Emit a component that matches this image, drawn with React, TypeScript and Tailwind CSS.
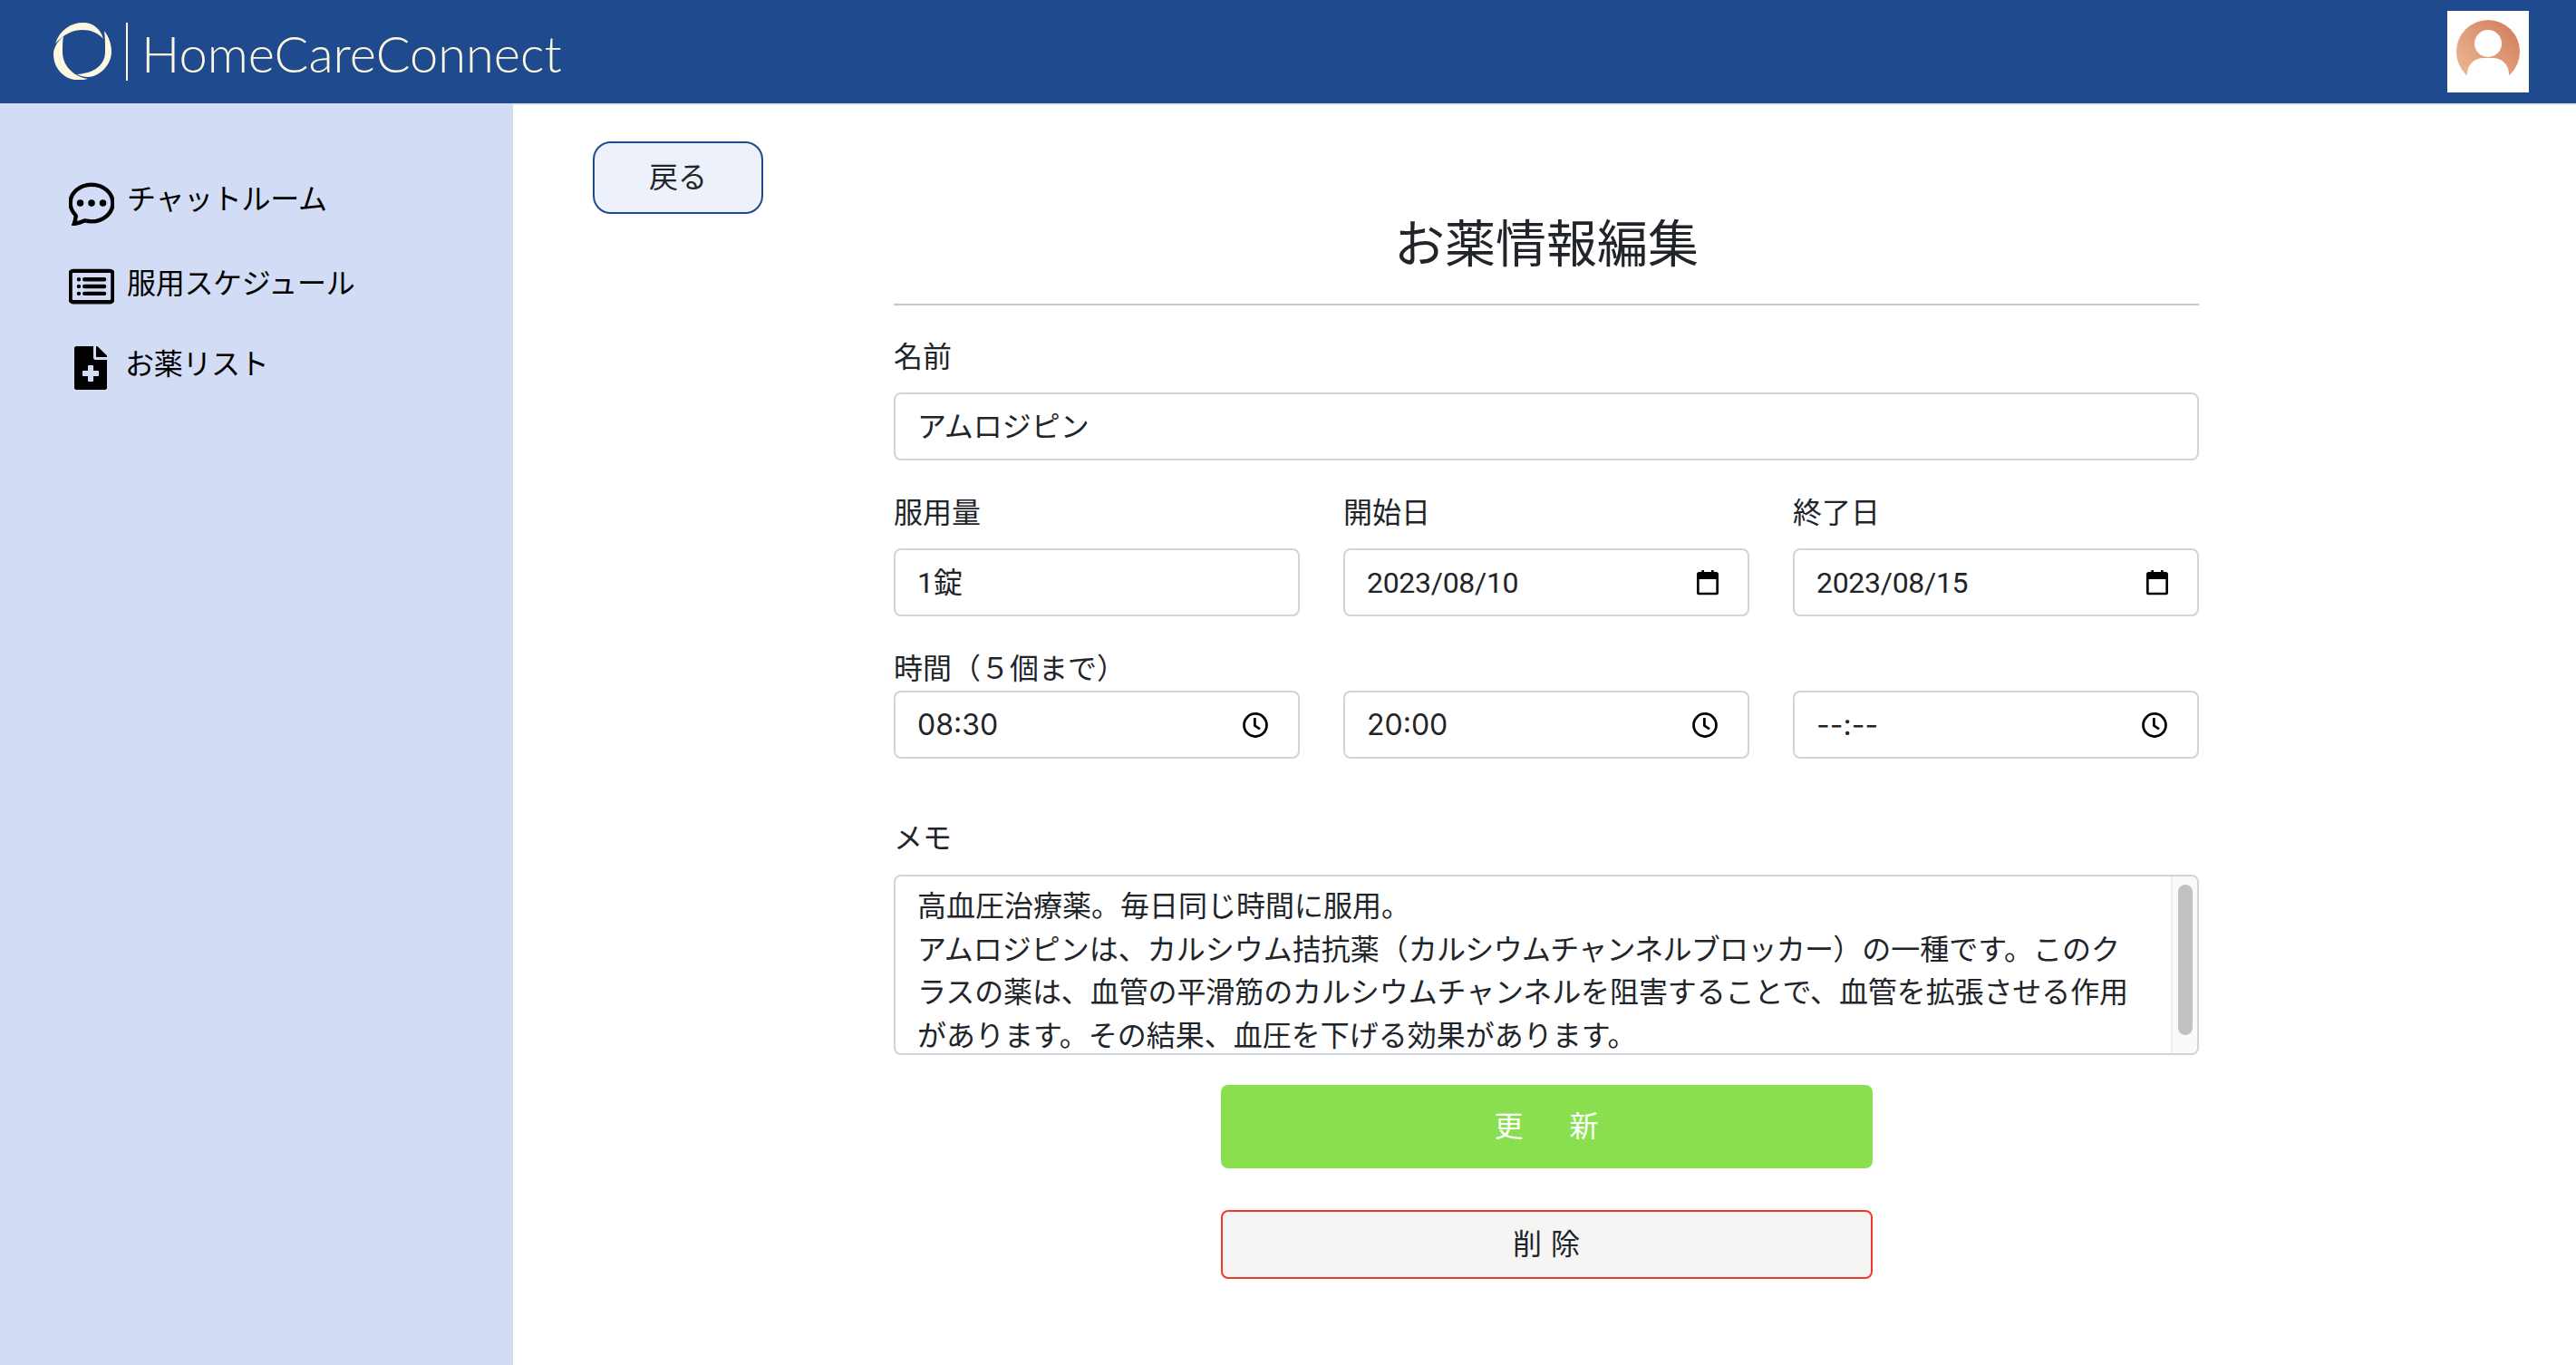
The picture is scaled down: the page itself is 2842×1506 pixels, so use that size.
import { BsCardList, BsChatDots } from 'react-icons/bs'
import { FaFileMedical } from 'react-icons/fa'

const FONT = "font-['Roboto','Noto_Sans_CJK_JP',sans-serif]"

const NAV = [
  { label: 'チャットルーム', icon: <BsChatDots className="w-[50px] h-[50px] stroke-[0.4px]" />, gap: 'mt-[85px]', text: 'ml-[14px] mb-[9px]' },
  { label: '服用スケジュール', icon: <BsCardList className="w-[50px] h-[50px] stroke-[0.4px]" />, gap: 'mt-[42px]', text: 'ml-[14px] mb-[6px]' },
  { label: 'お薬リスト', icon: <FaFileMedical className="w-[36px] h-[48px] -ml-[2px]" />, gap: 'mt-[40px]', text: 'ml-[12px] mb-[9px]' },
]

function CalendarIcon() {
  return (
    <svg viewBox="0 0 24 24" className="w-[32px] h-[32px] mr-[4px] shrink-0" fill="#000">
      <path d="M5 3h2V1.5h2V3h6V1.5h2V3h2a2 2 0 0 1 2 2v15a2 2 0 0 1-2 2H5a2 2 0 0 1-2-2V5a2 2 0 0 1 2-2zm0 6v11h14V9H5z" />
    </svg>
  )
}

function ClockIcon() {
  return (
    <svg viewBox="0 0 24 24" className="w-[30px] h-[30px] mr-[8px] shrink-0" fill="none" stroke="#000" strokeWidth="2.2">
      <circle cx="12" cy="12" r="10" />
      <path d="M11.5 5.5V12.5L16 15.5" />
    </svg>
  )
}

function Field({ value, icon, valueClass = '' }: { value: string; icon?: React.ReactNode; valueClass?: string }) {
  return (
    <div className="h-[75px] flex items-center justify-between px-[24px] bg-white border-2 border-[#ced4da] rounded-[8px] text-[32px] text-[#212529]">
      <span className={valueClass}>{value}</span>
      {icon}
    </div>
  )
}

function Label({ children, className = '' }: { children: React.ReactNode; className?: string }) {
  return <div className={`text-[32px] leading-[48px] text-[#212529] ${className}`}>{children}</div>
}

export default function App() {
  return (
    <div className={`h-screen flex flex-col overflow-hidden bg-white ${FONT}`}>
      <header className="h-[114px] shrink-0 bg-[#1f4b8e] flex items-center justify-between pl-[59px] pr-[52px]">
        <div className="flex items-center">
          <svg viewBox="0 0 64 64" className="w-[64px] h-[64px]" fill="#fff8e1">
            <path d="M2 23C7 8 19 0 33 0C44 0 52 7 55 18C49 11 41 8 32 8C22 8 12 12 2 23z" />
            <path d="M56 9C61 15 64 24 64 32C64 47 50 60 38 60C34 60 30 59 26 57C40 56 57 50 57 32C57 24 57 16 56 9z" />
            <path d="M11 15C4 21 0 28 0 35C0 50 12 64 28 63C32 63 35 63 38 62C25 60 10 50 10 32C10 26 10 20 11 15z" />
          </svg>
          <div className="w-[2px] h-[64px] ml-[16px] bg-[#fff8e1]" />
          <span className="ml-[15px] mt-[3px] font-['Lato',sans-serif] font-light text-[56px] leading-[64px] text-[#fff8e1]">HomeCareConnect</span>
        </div>
        <div className="w-[90px] h-[90px] bg-white flex items-center justify-center">
          <svg viewBox="0 0 70 70" className="w-[70px] h-[70px]">
            <defs>
              <linearGradient id="avatar" x1="0" y1="1" x2="1" y2="0">
                <stop offset="0" stopColor="#eebd98" />
                <stop offset="1" stopColor="#d27a5a" />
              </linearGradient>
            </defs>
            <circle cx="35" cy="35" r="35" fill="url(#avatar)" />
            <circle cx="35" cy="26" r="15" fill="#fff" />
            <path d="M12 70V60c0-11 8-18 18-18h10c10 0 18 7 18 18v10z" fill="#fff" />
          </svg>
        </div>
      </header>

      <div className="flex-1 flex min-h-0">
        <nav className="w-[566px] shrink-0 bg-[#d2dcf5] pl-[76px] flex flex-col">
          {NAV.map(item => (
            <div key={item.label} className={`flex items-center h-[50px] ${item.gap}`}>
              <span className="w-[50px] flex justify-center text-black">{item.icon}</span>
              <span className={`text-[32px] tracking-[-0.3px] text-black ${item.text}`}>{item.label}</span>
            </div>
          ))}
        </nav>

        <main className="flex-1 border-t-2 border-[#e5e5e5] pl-[88px] pt-[40px]">
          <button className="block w-[188px] h-[80px] bg-[#edf1f9] border-2 border-[#1f4b8e] rounded-[20px] text-[32px] text-[#212529]">
            戻る
          </button>

          <div className="w-[1440px] ml-[332px]">
            <h1 className="text-[56px] leading-[68px] text-center text-[#212529]">お薬情報編集</h1>
            <div className="h-[2px] mt-[31px] bg-[#c8c9cb]" />

            <Label className="mt-[33px] mb-[15px]">名前</Label>
            <Field value="アムロジピン" />

            <div className="grid grid-cols-3 gap-x-[48px] mt-[34px]">
              <Label className="mb-[15px]">服用量</Label>
              <Label className="mb-[15px]">開始日</Label>
              <Label className="mb-[15px]">終了日</Label>
              <Field value="1錠" />
              <Field value="2023/08/10" icon={<CalendarIcon />} valueClass="tracking-[-0.3px]" />
              <Field value="2023/08/15" icon={<CalendarIcon />} valueClass="tracking-[-0.3px]" />
            </div>

            <Label className="mt-[34px]">時間（５個まで）</Label>
            <div className="grid grid-cols-3 gap-x-[48px]">
              <Field value="08:30" icon={<ClockIcon />} valueClass="font-['Inter',sans-serif]" />
              <Field value="20:00" icon={<ClockIcon />} valueClass="font-['Inter',sans-serif]" />
              <Field value="--:--" icon={<ClockIcon />} valueClass="font-['Inter',sans-serif]" />
            </div>

            <Label className="mt-[64px] mb-[16px]">メモ</Label>
            <div className="h-[199px] flex overflow-hidden bg-white border-2 border-[#ced4da] rounded-[8px]">
              <div className="flex-1 pl-[24px] pt-[10px] text-[32px] leading-[47.6px] text-[#212529] whitespace-nowrap">
                <div>高血圧治療薬。毎日同じ時間に服用。</div>
                <div>
                  アムロジピンは、カルシウム拮抗薬（
                  <span className="tracking-[-0.7px]">カルシウムチャンネルブロッカー</span>
                  ）の一種です。このク
                </div>
                <div className="tracking-[-0.1px]">ラスの薬は、血管の平滑筋のカルシウムチャンネルを阻害することで、血管を拡張させる作用</div>
                <div>があります。その結果、血圧を下げる効果があります。</div>
              </div>
              <div className="w-[29px] shrink-0 bg-[#fafafa] border-l-2 border-[#ececec] pl-[6px] pt-[9px]">
                <div className="w-[16px] h-[166px] rounded-full bg-[#c1c1c1]" />
              </div>
            </div>

            <button className="w-[719px] h-[92px] mx-auto mt-[33px] flex items-center justify-center gap-[51px] bg-[#8adf4e] rounded-[8px] text-[32px] text-white">
              <span>更</span>
              <span>新</span>
            </button>
            <button className="w-[719px] h-[76px] mx-auto mt-[46px] flex items-center justify-center gap-[10px] bg-[#f6f5f3] border-2 border-[#ee3a2a] rounded-[8px] text-[32px] text-[#212529]">
              <span>削</span>
              <span>除</span>
            </button>
          </div>
        </main>
      </div>
    </div>
  )
}
